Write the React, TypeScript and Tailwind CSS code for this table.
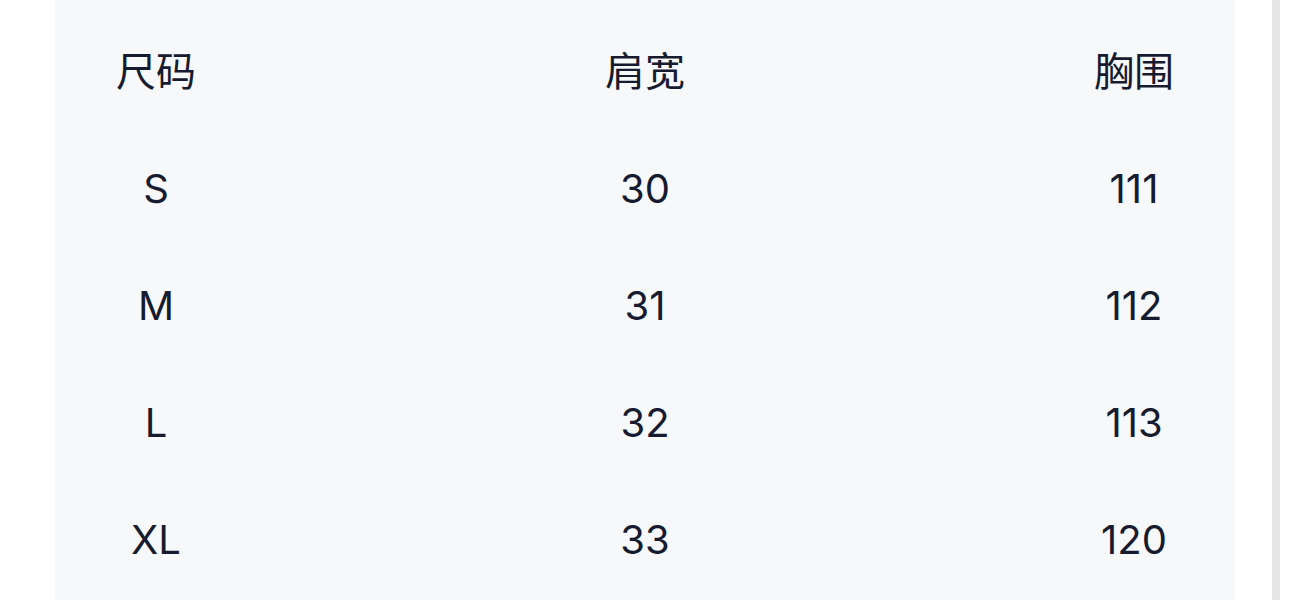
import React from "react";

const rows = [
  ["尺码", "肩宽", "胸围"],
  ["S", "30", "111"],
  ["M", "31", "112"],
  ["L", "32", "113"],
  ["XL", "33", "120"],
];

export default function App() {
  return (
    <div className="w-[1290px] h-[600px] bg-white overflow-hidden flex">
      <div className="w-[55px] shrink-0" />
      <div className="w-[1180px] shrink-0 -mt-[12px] h-[640px] rounded-[14px] bg-[#f6f8fa] pt-[12px]">
        <div
          className="flex flex-col px-[56px] pt-[13px] text-[40px] text-[#171b2f]"
          style={{ fontFamily: '"Inter", "Noto Sans CJK SC", sans-serif' }}
        >
          {rows.map((r, i) => (
            <div key={i} className="flex justify-between items-center h-[117px]">
              {r.map((c, j) => (
                <div key={j} className="w-[90px] text-center leading-none">
                  {c}
                </div>
              ))}
            </div>
          ))}
        </div>
      </div>
      <div className="w-[37px] shrink-0" />
      <div className="w-[8px] shrink-0 bg-[#e6e6e6]" />
    </div>
  );
}
